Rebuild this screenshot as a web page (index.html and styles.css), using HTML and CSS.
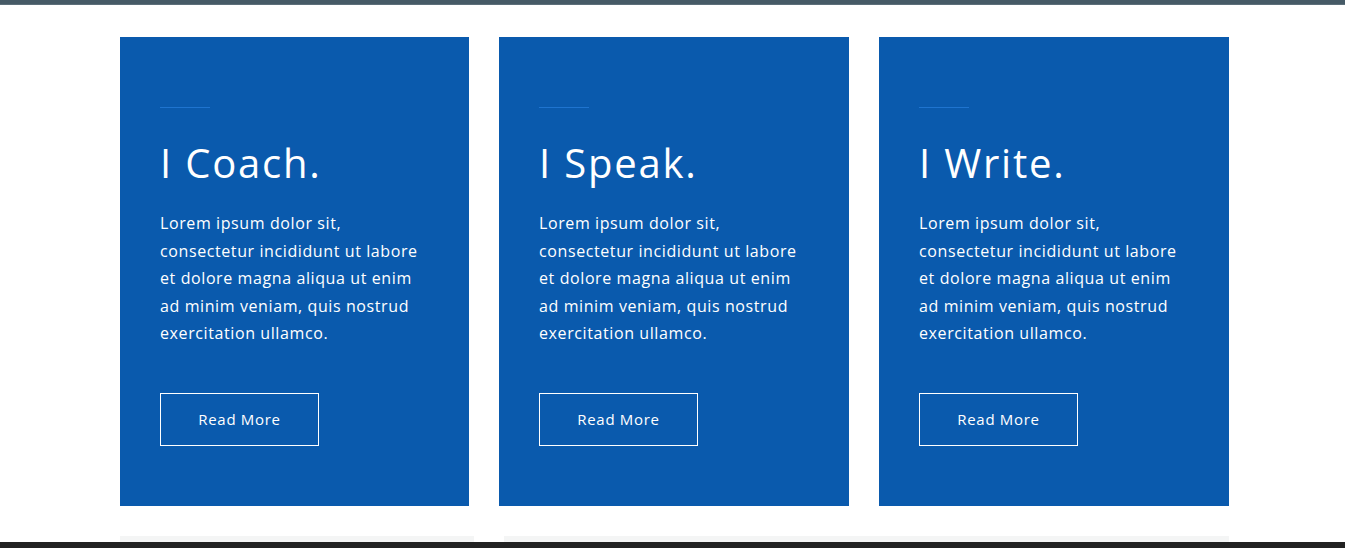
FILE: index.html
```html
<!DOCTYPE html>
<html lang="en">
<head>
<meta charset="utf-8">
<title>Services</title>
<link rel="stylesheet" href="styles.css">
</head>
<body>
<div class="topbar"></div>
<main class="wrap">
  <section class="cards">
    <article class="card">
      <div class="rule"></div>
      <h2 class="card-title">I Coach.</h2>
      <p class="card-text">Lorem ipsum dolor sit, consectetur incididunt ut labore et dolore magna aliqua ut enim ad minim veniam, quis nostrud exercitation ullamco.</p>
      <a class="btn" href="#">Read More</a>
    </article>
    <article class="card">
      <div class="rule"></div>
      <h2 class="card-title">I Speak.</h2>
      <p class="card-text">Lorem ipsum dolor sit, consectetur incididunt ut labore et dolore magna aliqua ut enim ad minim veniam, quis nostrud exercitation ullamco.</p>
      <a class="btn" href="#">Read More</a>
    </article>
    <article class="card">
      <div class="rule"></div>
      <h2 class="card-title">I Write.</h2>
      <p class="card-text">Lorem ipsum dolor sit, consectetur incididunt ut labore et dolore magna aliqua ut enim ad minim veniam, quis nostrud exercitation ullamco.</p>
      <a class="btn" href="#">Read More</a>
    </article>
  </section>
  <section class="next">
    <div class="panel panel-a"></div>
    <div class="panel panel-b"></div>
  </section>
</main>
<div class="footbar"></div>
</body>
</html>
```

FILE: styles.css
```css
* { box-sizing: border-box; }
html, body { margin: 0; padding: 0; }
body {
  background: #ffffff;
  font-family: "Open Sans", "DejaVu Sans", sans-serif;
  color: #ffffff;
  overflow: hidden;
}
.topbar {
  height: 5px;
  background: #465a66;
  border-bottom: 1px solid #5d6f7a;
}
.wrap {
  width: 1109px;
  margin-left: 120px;
  padding-top: 32px;
}
.cards {
  display: grid;
  grid-template-columns: 349px 350px 350px;
  column-gap: 30px;
}
.card {
  background: #0a5aad;
  height: 469px;
  padding: 70px 40px 60px;
  display: flex;
  flex-direction: column;
  align-items: flex-start;
}
.rule {
  width: 50px;
  height: 1px;
  background: #1f74cf;
}
.card-title {
  margin: 31px 0 0;
  font-weight: 400;
  font-size: 40px;
  line-height: 48px;
  letter-spacing: 1.8px;
}
.card-text {
  margin: 23px 0 0;
  font-size: 16px;
  line-height: 27.5px;
  letter-spacing: 0.6px;
  width: 268px;
}
.btn {
  margin-top: 45px;
  width: 159px;
  height: 53px;
  border: 1px solid #ffffff;
  color: #ffffff;
  text-decoration: none;
  font-size: 15px;
  letter-spacing: 0.7px;
  display: flex;
  align-items: center;
  justify-content: center;
}
.next {
  display: grid;
  grid-template-columns: 354px 725px;
  column-gap: 30px;
  margin-top: 30px;
}
.panel {
  height: 200px;
  background: #f4f5f5;
}
.footbar {
  position: fixed;
  left: 0;
  right: 0;
  bottom: 0;
  height: 6px;
  background: #222222;
}
```
